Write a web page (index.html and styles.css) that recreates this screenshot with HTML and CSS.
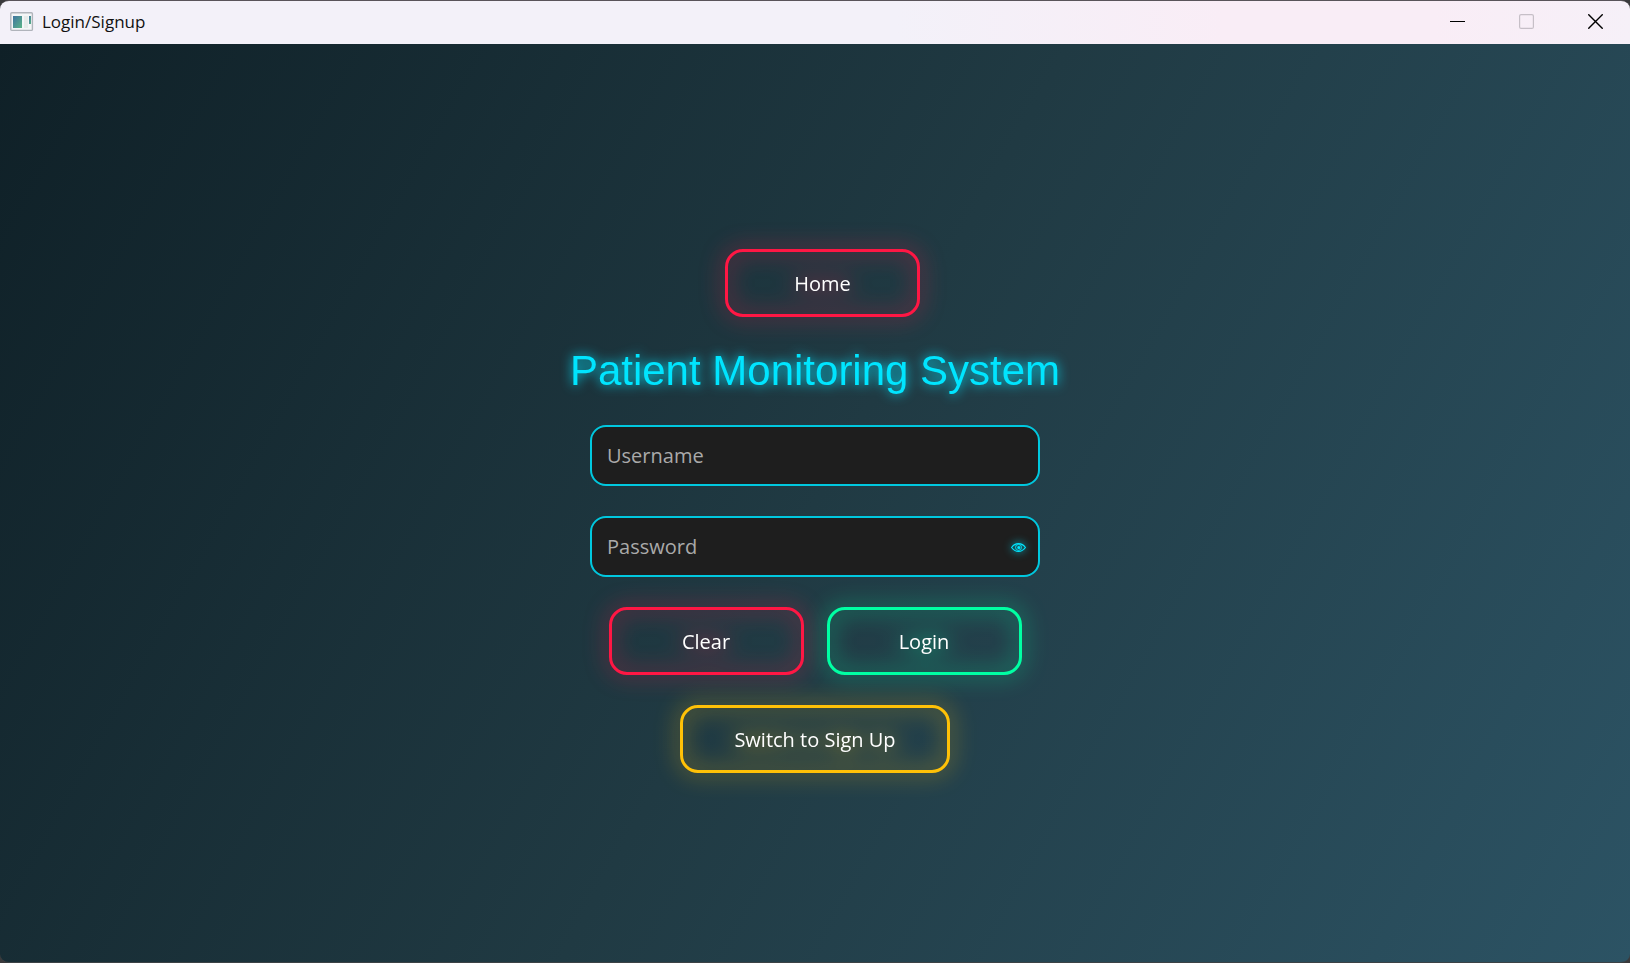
FILE: index.html
```html
<!DOCTYPE html>
<html lang="en">
<head>
<meta charset="utf-8">
<title>Login/Signup</title>
<link rel="stylesheet" href="styles.css">
</head>
<body>
<div class="window">
  <header class="titlebar">
    <svg class="app-icon" width="24" height="20" viewBox="0 0 24 20" aria-hidden="true">
      <defs>
        <linearGradient id="pane" x1="0" y1="0" x2="1" y2="1">
          <stop offset="0" stop-color="#3f74a0"/>
          <stop offset="1" stop-color="#5bb487"/>
        </linearGradient>
      </defs>
      <rect x="0.8" y="0.8" width="21.6" height="17.6" rx="1" fill="#f4f6f7" stroke="#b0b4bb" stroke-width="1.4"/>
      <rect x="3" y="4" width="9" height="12" fill="url(#pane)"/>
      <rect x="14" y="4" width="4" height="12" fill="#e6ebea"/>
      <rect x="19" y="4" width="2" height="8" fill="url(#pane)"/>
    </svg>
    <span class="caption">Login/Signup</span>
    <div class="window-controls">
      <button class="control" type="button" aria-label="Minimize">
        <svg width="15" height="15" viewBox="0 0 15 15"><path d="M0 7.5H15" stroke="#000" stroke-width="1"/></svg>
      </button>
      <button class="control" type="button" aria-label="Maximize" disabled>
        <svg width="15" height="15" viewBox="0 0 15 15"><rect x="0.6" y="0.6" width="13.8" height="13.8" rx="1.5" fill="none" stroke="#c6bfc7" stroke-width="1.2"/></svg>
      </button>
      <button class="control" type="button" aria-label="Close">
        <svg width="15" height="15" viewBox="0 0 15 15"><path d="M0.3 0.3L14.7 14.7M14.7 0.3L0.3 14.7" stroke="#000" stroke-width="1.4"/></svg>
      </button>
    </div>
  </header>
  <main class="scene">
    <form class="login">
      <div class="home-row">
        <button class="btn btn-red" type="button">Home</button>
      </div>
      <h1 class="heading">Patient Monitoring System</h1>
      <div class="field">
        <input class="field-input" type="text" placeholder="Username" aria-label="Username">
      </div>
      <div class="field">
        <input class="field-input" type="password" placeholder="Password" aria-label="Password">
        <button class="reveal" type="button" aria-label="Show password">
          <svg width="15" height="9" viewBox="0 0 15 9">
            <path d="M0.6 4.5C2.6 1.6 5 0.6 7.5 0.6S12.4 1.6 14.4 4.5C12.4 7.4 10 8.4 7.5 8.4S2.6 7.4 0.6 4.5Z" fill="none" stroke="#00e5ff" stroke-width="1.2"/>
            <circle cx="7.5" cy="4.4" r="3" fill="none" stroke="#00e5ff" stroke-width="0.9"/>
            <circle cx="7.8" cy="4.5" r="1.5" fill="#00e5ff"/>
          </svg>
        </button>
      </div>
      <div class="actions">
        <button class="btn btn-red" type="reset">Clear</button>
        <button class="btn btn-green" type="button">Login</button>
      </div>
      <button class="btn btn-amber btn-wide" type="button">Switch to Sign Up</button>
    </form>
  </main>
</div>
</body>
</html>
```
FILE: styles.css
```css
* {
  box-sizing: border-box;
}

body {
  margin: 0;
  background: #3a3a3c;
  font-family: "Open Sans", "Noto Sans", sans-serif;
}

.window {
  display: flex;
  flex-direction: column;
  min-height: 100vh;
  border-top: 1px solid #59545a;
  border-bottom: 1px solid #3c4245;
  border-radius: 9px;
  overflow: hidden;
}

.titlebar {
  display: flex;
  align-items: center;
  height: 43px;
  padding: 0 0 2px 10px;
  background: linear-gradient(90deg, #f3f1f9 0%, #f3f1f9 55%, #f9edf6 75%, #f9edf6 88%, #f6f0f8 100%);
}

.caption {
  margin-left: 8px;
  color: #111;
  font-size: 17px;
}

.window-controls {
  display: flex;
  align-self: stretch;
  margin-left: auto;
}

.control {
  display: flex;
  align-items: center;
  justify-content: center;
  width: 69px;
  padding: 0;
  border: 0;
  background: none;
}

.scene {
  display: flex;
  flex: 1;
  align-items: center;
  justify-content: center;
  padding-top: 16px;
  background: linear-gradient(119deg, #0f2027, #203a43 50%, #2c5364);
}

.login {
  display: flex;
  flex-direction: column;
  align-items: center;
  gap: 30px;
}

.home-row {
  padding-left: 15px;
}

.heading {
  margin: 0;
  color: #00e5ff;
  font: 400 42px/48px "Liberation Sans", Arial, sans-serif;
  filter: drop-shadow(0 0 6px #00e5ff);
}

.field {
  position: relative;
  width: 450px;
}

.field-input {
  display: block;
  width: 100%;
  height: 61px;
  padding: 0 15px;
  border: 2px solid #00c8df;
  border-radius: 16px;
  background: #1e1e1e;
  color: #fff;
  font-family: inherit;
  font-size: 20px;
}

.field-input::placeholder {
  color: #aaa;
  opacity: 1;
}

.reveal {
  position: absolute;
  top: 0;
  right: 14px;
  bottom: 0;
  display: flex;
  align-items: center;
  padding: 2px 0 0;
  border: 0;
  background: none;
  filter: drop-shadow(0 0 4px #00e5ff);
}

.actions {
  display: flex;
  gap: 23px;
}

.btn {
  width: 195px;
  height: 68px;
  padding: 0;
  border: 3px solid;
  border-radius: 18px;
  background: none;
  font-family: inherit;
  font-size: 20px;
}

.btn-wide {
  width: 270px;
}

.btn-red {
  border-color: #ff1744;
  filter: drop-shadow(0 0 11px #ff1744);
}

.btn-green {
  border-color: #00ffa3;
  filter: drop-shadow(0 0 11px #00ffa3);
}

.btn-amber {
  border-color: #ffc107;
  filter: drop-shadow(0 0 11px #ffc107);
}

.btn-red,
.btn-green,
.btn-amber {
  color: #fff;
}
```
